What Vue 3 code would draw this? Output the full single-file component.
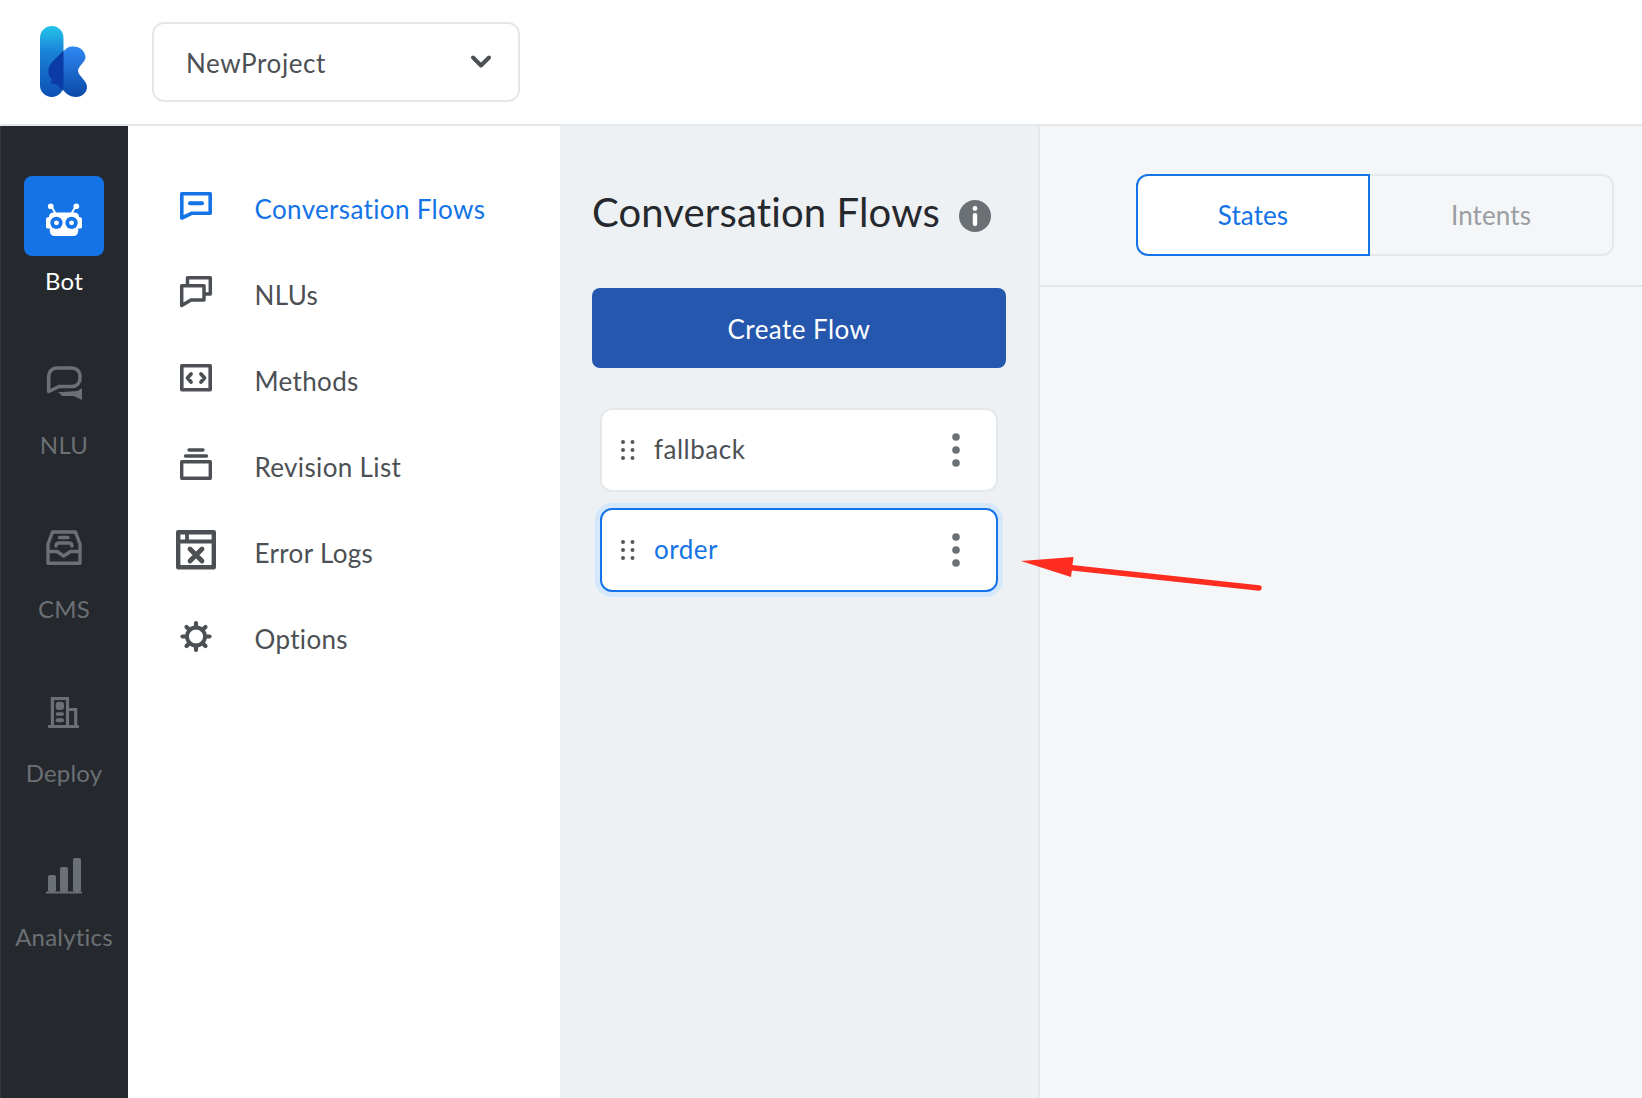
<script setup>
const cards = [
  { name: 'fallback', active: false },
  { name: 'order', active: true },
]
</script>

<template>
  <div class="page">
    <header class="topbar">
      <div class="logo-cell">
        <svg class="logo" width="60" height="80" viewBox="34 22 60 80">
          <defs>
            <linearGradient id="barGrad" x1="0" y1="0" x2="0" y2="1">
              <stop offset="0" stop-color="#22c6ea" />
              <stop offset="0.35" stop-color="#1b84d8" />
              <stop offset="1" stop-color="#0d4fb4" />
            </linearGradient>
            <linearGradient id="lobeGrad" x1="0" y1="0" x2="0" y2="1">
              <stop offset="0" stop-color="#2f88f2" />
              <stop offset="1" stop-color="#0b49a8" />
            </linearGradient>
            <clipPath id="barClip"><rect x="40" y="26" width="23.5" height="71" rx="11.7" /></clipPath>
          </defs>
          <rect x="40" y="26" width="23.5" height="71" rx="11.7" fill="url(#barGrad)" />
          <path d="M72 46.5C80 46 85 51 85.5 57C85.5 62 79 65 78 70.5C78 76 87 80 87 87C87 92.5 82 97 76 97C70 97 66.500 94 63 90L50 77C47 72 48 67 51 63L67 48C69 47 70 46.500 72 46.500Z" fill="url(#lobeGrad)" />
          <path clip-path="url(#barClip)" d="M64 50L53 61C47 67 47 75 52 80L50 83C54 84 57 84 59 87L64 92Z" fill="#0a3ba6" />
        </svg>
      </div>
      <button class="project">
        <span>NewProject</span>
        <svg width="22" height="16" viewBox="0 0 22 16"><path d="M3 3.500L11 11.500L19 3.500" fill="none" stroke="#4c5054" stroke-width="4" stroke-linecap="round" stroke-linejoin="round" /></svg>
      </button>
    </header>

    <div class="body">
      <aside class="rail">
        <div class="rail-item on">
          <div class="tile">
            <svg width="38" height="36" viewBox="0 0 40 38" fill="#fff">
              <circle cx="6" cy="4.500" r="3" /><circle cx="33" cy="4.500" r="3" />
              <path d="M7 5L11 12M32 5L28 12" stroke="#fff" stroke-width="2" />
              <path d="M9 11H31A5 5 0 0 1 36 16H37A2 2 0 0 1 39 18V26A2 2 0 0 1 37 28H35V31A5 5 0 0 1 30 36H10A5 5 0 0 1 5 31V28H3A2 2 0 0 1 1 26V18A2 2 0 0 1 3 16H4A5 5 0 0 1 9 11Z" />
              <circle cx="12" cy="22" r="6.500" fill="#1473e6" /><circle cx="12" cy="22" r="2.600" />
              <circle cx="28" cy="22" r="6.500" fill="#1473e6" /><circle cx="28" cy="22" r="2.600" />
            </svg>
          </div>
          <span class="rail-label">Bot</span>
        </div>
        <div class="rail-item">
          <div class="tile">
            <svg width="36" height="36" viewBox="0 0 36 36" fill="none" stroke="#6b7075" stroke-width="3.600" stroke-linejoin="round" stroke-linecap="round">
              <path d="M10.500 2H26A8 8 0 0 1 34 10V12.500A8 8 0 0 1 26 20.500H13L2.700 25.500V10A8 8 0 0 1 10.500 2Z" />
              <path d="M12 26.300L31.300 25L36 22.300V34L28 30H16.300Z" fill="#6b7075" stroke="none" />
            </svg>
          </div>
          <span class="rail-label">NLU</span>
        </div>
        <div class="rail-item">
          <div class="tile">
            <svg width="36" height="36" viewBox="0 0 36 36" fill="none" stroke="#6b7075" stroke-width="3.400" stroke-linejoin="round" stroke-linecap="round">
              <path d="M6.500 2H29.500L34 14V33.300H2V14Z" />
              <path d="M2 21.500H11L17.700 26L24.500 21.500H34" />
              <path d="M13.500 7.500H22" />
              <path d="M10 16Q10 13 13 13H23Q26 13 26 16" />
            </svg>
          </div>
          <span class="rail-label">CMS</span>
        </div>
        <div class="rail-item">
          <div class="tile">
            <svg width="32" height="32" viewBox="0 0 32 32" fill="#6b7075">
              <path d="M4.400 30V2.500H19.500V30M19.500 13.500H27.700V30" fill="none" stroke="#6b7075" stroke-width="3.200" />
              <rect x="0" y="29" width="31" height="3" rx="1" />
              <rect x="7.700" y="5.700" width="8.300" height="8.300" rx="3" />
              <rect x="7.700" y="16.300" width="8.300" height="3.400" rx="1.700" />
              <rect x="7.700" y="22.300" width="8.300" height="4" rx="2" />
            </svg>
          </div>
          <span class="rail-label">Deploy</span>
        </div>
        <div class="rail-item">
          <div class="tile">
            <svg width="36" height="36" viewBox="0 0 36 36" fill="#6b7075">
              <rect x="2" y="17" width="8" height="17" rx="2" /><rect x="14" y="9" width="8" height="25" rx="2" /><rect x="27" y="0" width="8" height="34" rx="2" />
              <rect x="0" y="33.500" width="36" height="2" />
            </svg>
          </div>
          <span class="rail-label">Analytics</span>
        </div>
      </aside>

      <nav class="menu">
        <div class="menu-row current">
          <svg class="mi" viewBox="0 0 40 40" fill="none" stroke="#1473e6" stroke-width="3.600" stroke-linejoin="round" stroke-linecap="round">
            <path d="M5.800 4.800H34.200V24.200H16L5.800 29Z" /><path d="M14 14.300H26" stroke-width="4" />
          </svg>
          <span>Conversation Flows</span>
        </div>
        <div class="menu-row">
          <svg class="mi" viewBox="0 0 40 40" fill="none" stroke="#4c5054" stroke-width="3.500" stroke-linejoin="round" stroke-linecap="round">
            <path d="M5.700 10.800H28V25H15L5.700 30.500Z" /><path d="M11.500 9V2.800H34.300V19H29" />
          </svg>
          <span>NLUs</span>
        </div>
        <div class="menu-row">
          <svg class="mi" viewBox="0 0 40 40" fill="none" stroke="#4c5054" stroke-width="3.600" stroke-linejoin="round" stroke-linecap="round">
            <rect x="5.800" y="4.800" width="28.400" height="24" /><path d="M15 13L11.500 17L15 21M25 13L28.500 17L25 21" stroke-width="3.800" />
          </svg>
          <span>Methods</span>
        </div>
        <div class="menu-row">
          <svg class="mi" viewBox="0 0 40 40" fill="none" stroke="#4c5054" stroke-width="3.400" stroke-linejoin="round" stroke-linecap="round">
            <rect x="5.700" y="14.800" width="28.600" height="16.500" /><path d="M13 3H27M9.500 9H30.500" />
          </svg>
          <span>Revision List</span>
        </div>
        <div class="menu-row">
          <svg class="mi" viewBox="0 0 40 40" fill="none" stroke="#4c5054" stroke-width="4.400" stroke-linejoin="round" stroke-linecap="round">
            <rect x="2.200" y="-0.800" width="35.600" height="35" /><path d="M2 8.500H37M11 0V8" stroke-width="3.800" />
            <path d="M14 16L26 28M26 16L14 28" stroke-width="4.800" />
          </svg>
          <span>Error Logs</span>
        </div>
        <div class="menu-row">
          <svg class="mi" viewBox="0 0 40 40" fill="none" stroke="#4c5054" stroke-linecap="round">
            <circle cx="20" cy="17.500" r="9" stroke-width="3.800" />
            <path d="M20 4V8.500M20 26.500V31M6.500 17.500H11M29 17.500H33.500M10.500 8L13.600 11.100M26.400 23.900L29.500 27M29.500 8L26.400 11.100M13.600 23.900L10.500 27" stroke-width="4.200" />
          </svg>
          <span>Options</span>
        </div>
      </nav>

      <section class="flows">
        <div class="flows-head">
          <h1>Conversation Flows</h1>
          <svg class="info" width="32" height="32" viewBox="0 0 32 32">
            <circle cx="16" cy="16" r="16" fill="#6b7075" />
            <circle cx="16" cy="8.500" r="2.400" fill="#fff" /><rect x="13.800" y="13" width="4.400" height="13" rx="2" fill="#fff" />
          </svg>
        </div>
        <button class="create">Create Flow</button>
        <ul class="cards">
          <li v-for="c in cards" :key="c.name" class="card" :class="{ active: c.active }">
            <svg class="grip" width="16" height="22" viewBox="0 0 16 22" fill="#53575b">
              <circle cx="3" cy="3" r="2" /><circle cx="12.500" cy="3" r="2" />
              <circle cx="3" cy="11" r="2" /><circle cx="12.500" cy="11" r="2" />
              <circle cx="3" cy="19" r="2" /><circle cx="12.500" cy="19" r="2" />
            </svg>
            <span class="card-name">{{ c.name }}</span>
            <svg class="kebab" width="8" height="34" viewBox="0 0 8 34" fill="#6b7075">
              <circle cx="4" cy="4" r="3.800" /><circle cx="4" cy="17" r="3.800" /><circle cx="4" cy="30" r="3.800" />
            </svg>
          </li>
        </ul>
      </section>

      <section class="canvas">
        <div class="canvas-head">
          <div class="tabs">
            <div class="tab sel">States</div>
            <div class="tab">Intents</div>
          </div>
        </div>
      </section>
    </div>

    <svg class="arrow" width="1642" height="1098" viewBox="0 0 1642 1098">
      <path d="M1021 561L1073.500 557L1071 577Z" fill="#ff2d20" />
      <path d="M1060 566.500L1259 588" stroke="#ff2d20" stroke-width="5.500" stroke-linecap="round" />
    </svg>
  </div>
</template>

<style scoped>
.page {
  position: relative;
  width: 1642px;
  height: 1098px;
  overflow: hidden;
  display: flex;
  flex-direction: column;
  background: #fff;
  font-family: Lato, "Open Sans", sans-serif;
  color: #4c5054;
}
.topbar {
  height: 126px;
  box-sizing: border-box;
  flex: none;
  display: flex;
  align-items: flex-start;
  border-bottom: 2px solid #e5e8ea;
}
.logo-cell {
  width: 152px;
  flex: none;
  padding: 22px 0 0 34px;
  box-sizing: border-box;
}
.logo { display: block; }
.project {
  margin-top: 22px;
  width: 368px;
  height: 80px;
  box-sizing: border-box;
  display: flex;
  align-items: center;
  justify-content: space-between;
  padding: 2px 26px 0 32px;
  background: #fff;
  border: 2px solid #e5e8ea;
  border-radius: 12px;
  font: inherit;
  font-size: 26px;
  letter-spacing: 0.6px;
  color: #4c5054;
}
.project svg { margin-top: -3px; }
.body {
  flex: 1;
  display: flex;
  min-height: 0;
}
.rail {
  width: 128px;
  flex: none;
  box-sizing: border-box;
  padding-top: 50px;
  background: #25282d;
  border-left: 1px solid #34383d;
}
.rail-item {
  height: 164px;
  display: flex;
  flex-direction: column;
  align-items: center;
  margin-left: -1px;
}
.tile {
  width: 80px;
  height: 80px;
  box-sizing: border-box;
  padding-top: 8px;
  display: flex;
  align-items: center;
  justify-content: center;
  border-radius: 8px;
}
.on .tile {
  background: #1473e6;
}
.rail-label {
  margin-top: 13px;
  font-size: 24px;
  line-height: 24px;
  letter-spacing: 0.2px;
  color: #6b7075;
}
.on .rail-label { color: #fff; }
.menu {
  width: 432px;
  flex: none;
  box-sizing: border-box;
  padding: 40px 0 0 48px;
}
.menu-row {
  height: 86px;
  display: flex;
  align-items: center;
  gap: 38.500px;
  font-size: 26px;
  letter-spacing: 0.35px;
}
.menu-row.current { color: #1473e6; }
.mi {
  width: 40px;
  height: 40px;
  flex: none;
  overflow: visible;
}
.flows {
  width: 480px;
  flex: none;
  box-sizing: border-box;
  padding: 0 32px;
  background: #eef1f3;
  border-right: 2px solid #e5e8ea;
}
.flows-head {
  height: 162px;
  box-sizing: border-box;
  padding-top: 10px;
  display: flex;
  align-items: center;
  gap: 20px;
}
.flows-head h1 {
  margin: 0;
  font-size: 40px;
  font-weight: 400;
  letter-spacing: 0.15px;
  color: #25282d;
}
.info { margin-top: 8px; margin-left: -1px; }
.create {
  display: block;
  width: 414px;
  height: 80px;
  padding-top: 2px;
  border: 0;
  border-radius: 8px;
  background: #2557ae;
  color: #fff;
  font: inherit;
  font-size: 26px;
  letter-spacing: 0.45px;
}
.cards {
  list-style: none;
  margin: 40px 0 0;
  padding: 0 8px;
  display: flex;
  flex-direction: column;
  gap: 16px;
}
.card {
  height: 84px;
  box-sizing: border-box;
  display: flex;
  align-items: center;
  padding: 0 36px 2px 18px;
  background: #fff;
  border: 2px solid #e5e8ea;
  border-radius: 12px;
  font-size: 26px;
  letter-spacing: 0.5px;
}
.card.active {
  border-color: #1473e6;
  box-shadow: 0 0 0 5px #d5e7fa;
  color: #1473e6;
}
.card-name {
  flex: 1;
  margin-left: 18px;
}
.grip, .kebab { margin-top: 2px; }
.canvas {
  flex: 1;
  background: #f5f6f8;
}
.canvas-head {
  height: 161px;
  box-sizing: border-box;
  padding: 48px 28px 0 0;
  display: flex;
  justify-content: flex-end;
  border-bottom: 2px solid #e5e8ea;
}
.tabs {
  display: flex;
  height: 82px;
}
.tab {
  width: 244px;
  box-sizing: border-box;
  display: flex;
  align-items: center;
  justify-content: center;
  font-size: 26px;
  letter-spacing: 0.1px;
  color: #9a9ea3;
  border: 2px solid #e5e8ea;
  border-left: 0;
  border-radius: 0 12px 12px 0;
}
.tab.sel {
  width: 234px;
  background: #fff;
  color: #1473e6;
  border: 2px solid #1473e6;
  border-radius: 12px 0 0 12px;
}
.arrow {
  position: absolute;
  left: 0;
  top: 0;
  pointer-events: none;
}
</style>

<style>
html, body { margin: 0; padding: 0; background: #fff; }
</style>
